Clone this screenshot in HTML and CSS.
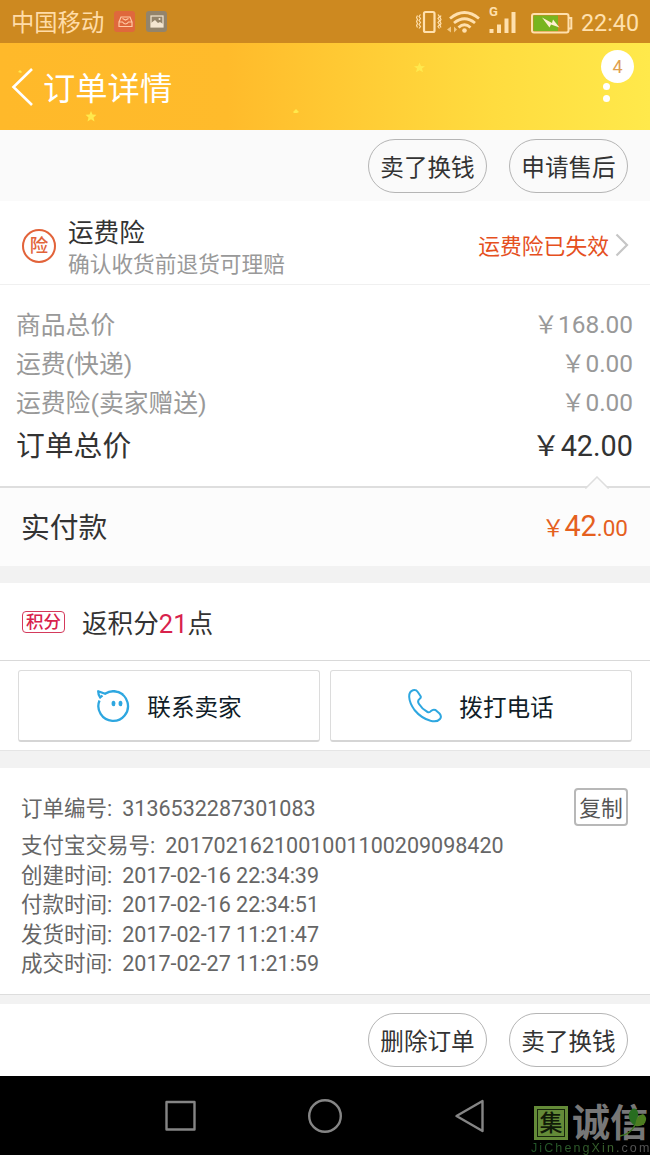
FILE: index.html
```html
<!DOCTYPE html>
<html lang="zh-CN">
<head>
<meta charset="utf-8">
<title>订单详情</title>
<link rel="stylesheet" href="styles.css">
</head>
<body>
<div class="screen">
  <div class="status">
    <span class="carrier">中国移动</span>
    <svg class="notifications" width="56" height="24" viewBox="0 0 56 24">
      <rect x="1" y="1" width="21" height="21" rx="3" fill="#df683c"/>
      <path d="M6 12L8 7H17L19 12V16.500H6V12H9.500Q12.500 16 15.500 12H19M9.500 8.500L12.500 10L15.500 8.500" fill="none" stroke="#ffc9a4" stroke-width="1.200"/>
      <rect x="33" y="1" width="21" height="21" rx="3" fill="#93846b"/>
      <rect x="38" y="6" width="12" height="11" fill="none" stroke="#f4e6d0" stroke-width="1.200"/>
      <path d="M38 13L42 10L45 13L47 12L50 14V17H38Z" fill="#f4e6d0"/><circle cx="46.500" cy="9" r="1" fill="#f4e6d0"/>
    </svg>
    <svg class="signals" width="158" height="36" viewBox="0 0 158 36" fill="none" stroke="#ffe0ad">
      <rect x="8" y="8" width="10.500" height="20" rx="1.500" stroke-width="2.200"/>
      <path d="M4.500 10.500l-1.500 2 1.500 2-1.500 2 1.500 2-1.500 2 1.500 2-1.500 2M1.500 11.500l-1 2 1 2-1 2 1 2-1 2 1 2M22 10.500l1.500 2-1.500 2 1.500 2-1.500 2 1.500 2-1.500 2 1.500 2M25 11.500l-1 2 1 2-1 2 1 2-1 2 1 2" stroke-width="1.200"/>
      <path d="M34 14.500Q48.500 2.500 63 14.500M38 19Q48.500 10.500 59 19M42.500 23.500Q48.500 18 54.500 23.500" stroke-width="2.800"/>
      <circle cx="48.500" cy="26.500" r="2.300" fill="#ffe0ad" stroke="none"/>
      <path d="M31 25.500l4-3v6zM41 25.500l-3-3v6z" fill="#f0c783" stroke="none"/>
      <path d="M73.500 25h4v4h-4zM81 20.500h4V29h-4zM88.500 14.500h4V29h-4zM95.500 8h4v21h-4z" fill="#ffe0ad" stroke="none"/>
      <rect x="116" y="10" width="36.500" height="18.500" rx="2" stroke-width="2"/>
      <path d="M117.500 11.500H142V27H117.500Z" fill="#78b51f" stroke="none"/>
      <path d="M153 14h2.300v10.500H153" stroke-width="2"/>
      <path d="M126 13.500L136 19L137 15.500L143.500 23.500L135 20.500L133.500 23.500Z" fill="#fff0d2" stroke="none"/>
    </svg>
    <span class="network">G</span>
    <span class="clock">22:40</span>
  </div>

  <div class="header">
    <svg class="stars" width="650" height="87" viewBox="0 0 650 87" fill="#ffe94d">
      <path d="M91 68l1.500 3.500 4 .3-3 2.600 1 4-3.500-2.200-3.500 2.200 1-4-3-2.600 4-.3z"/>
      <path d="M419.500 19.500l1.500 3.500 4 .3-3 2.300 1 3.600-3.500-2-3.500 2 1-3.600-3-2.300 4-.3z"/>
      <path d="M293 69l3-3 3 3-2 1h-3zM18 29l2-2 2 2-1 1z"/>
    </svg>
    <svg class="back" width="24" height="42" viewBox="0 0 24 42"><path d="M22 3L3.500 21L22 39" fill="none" stroke="#fff" stroke-width="2.600"/></svg>
    <h1 class="title">订单详情</h1>
    <div class="more"><span class="badge">4</span><i class="dot"></i><i class="dot"></i></div>
  </div>

  <div class="actions top-actions"><span class="pill">卖了换钱</span><span class="pill">申请售后</span></div>

  <div class="insurance">
    <span class="seal">险</span>
    <div class="insurance-text"><div class="insurance-name">运费险</div><div class="insurance-note">确认收货前退货可理赔</div></div>
    <span class="expired">运费险已失效</span>
    <svg class="chevron" width="14" height="26" viewBox="0 0 14 26"><path d="M1.500 2.500L12 13L1.500 23.500" fill="none" stroke="#c6c6c6" stroke-width="2.200"/></svg>
  </div>

  <div class="prices">
    <div class="price"><span class="label">商品总价</span><span>&#xFFE5;168.00</span></div>
    <div class="price"><span class="label">运费(快递)</span><span>&#xFFE5;0.00</span></div>
    <div class="price"><span class="label">运费险(卖家赠送)</span><span>&#xFFE5;0.00</span></div>
    <div class="price total"><span>订单总价</span><span>&#xFFE5;42.00</span></div>
  </div>

  <div class="paid">
    <svg class="notch" width="24" height="13" viewBox="0 0 24 13"><path d="M1 12L12 1L23 12V13H1Z" fill="#fcfcfc"/><path d="M0 12H1L12 1L23 12H24" fill="none" stroke="#dedede" stroke-width="1.500"/></svg>
    <span class="paid-label">实付款</span>
    <span class="paid-sum">&#xFFE5;<b>42</b>.00</span>
  </div>
  <div class="gap"></div>

  <div class="points"><span class="tag">积分</span><span class="points-text">返积分<em>21</em>点</span></div>

  <div class="contact">
    <div class="contact-button">
      <svg width="34" height="34" viewBox="0 0 34 34" fill="none" stroke="#2ea7e0" stroke-width="2.300" stroke-linejoin="round"><path d="M3.500 11.500A14.800 14.800 0 1 0 9 4.800L2.200 2.200Q2.200 6 4.200 8.500L6.500 6.500M9 4.800Q13 2.300 18 2.200Q23 2.500 27 5.500"/><ellipse cx="17.500" cy="14.500" rx="1.900" ry="2.800" fill="#2ea7e0" stroke="none"/><ellipse cx="24.500" cy="14.500" rx="1.900" ry="2.800" fill="#2ea7e0" stroke="none"/></svg>
      <span>联系卖家</span>
    </div>
    <div class="contact-button">
      <svg width="34" height="34" viewBox="0 0 34 34" fill="none" stroke="#2ea7e0" stroke-width="2" stroke-linejoin="round"><path d="M1.200 8Q1 2.500 5 1.300Q8 .5 9.800 3L12.500 7Q13.500 8.500 11.500 10Q9 12 11 15Q14 20 19.500 23Q21.500 24 23 22Q25 20 27.500 21L31.500 24.500Q34 27.500 32 30Q29 33.500 22.500 31.800Q13 29 6.500 21Q1.500 14 1.200 8Z"/></svg>
      <span>拨打电话</span>
    </div>
  </div>
  <div class="gap second-gap"></div>

  <div class="info">
    <div class="info-row number"><span><span class="key">订单编号:</span>3136532287301083</span><span class="copy">复制</span></div>
    <div class="info-row"><span class="key">支付宝交易号:</span>2017021621001001100209098420</div>
    <div class="info-row"><span class="key">创建时间:</span>2017-02-16 22:34:39</div>
    <div class="info-row"><span class="key">付款时间:</span>2017-02-16 22:34:51</div>
    <div class="info-row"><span class="key">发货时间:</span>2017-02-17 11:21:47</div>
    <div class="info-row"><span class="key">成交时间:</span>2017-02-27 11:21:59</div>
  </div>
  <div class="gap small-gap"></div>

  <div class="actions bottom-actions"><span class="pill">删除订单</span><span class="pill">卖了换钱</span></div>

  <div class="navbar">
    <svg class="keys" width="322" height="36" viewBox="0 0 322 36" fill="none" stroke="#858585" stroke-width="2.400" stroke-linejoin="round"><rect x="2.500" y="4" width="28" height="27.500"/><circle cx="161" cy="18" r="15.800"/><path d="M318.500 3V33L292.500 18Z"/></svg>
    <div class="watermark">
      <div class="brand"><span class="brand-mark">集</span><span class="brand-name">诚信</span></div>
      <div class="brand-url">JiChengXin.com</div>
      <svg class="leaf" width="30" height="34" viewBox="0 0 30 34"><path d="M16 21Q8 15 10 8Q14 1 18 5Q21 9 16 21Z" fill="#286d20"/><path d="M16 21Q17 10 24 9Q29 12 26 18Q22 22 16 21Z" fill="#4d7d20"/><path d="M16 20Q12 29 1 31" fill="none" stroke="#3f7422" stroke-width="1.500"/></svg>
    </div>
  </div>
</div>
</body>
</html>
```
FILE: styles.css
```css
* { box-sizing: border-box; }
body { margin: 0; }
.screen {
  width: 650px; height: 1155px; overflow: hidden;
  display: flex; flex-direction: column;
  background: #fff; color: #333;
  font-family: Roboto, "Noto Sans CJK SC", sans-serif;
  font-weight: 400; white-space: nowrap;
}
.screen > div { flex: none; }
.status {
  position: relative; height: 43px; padding: 0 11px;
  display: flex; align-items: center;
  background: #cd8920; color: #ffe0ad;
}
.carrier { padding-top: 2px; font-size: 23.3px; line-height: 42px; color: #ffdca8; }
.notifications { margin-left: 9px; }
.signals { margin-left: auto; }
.network { position: absolute; left: 489px; top: 4px; font: 700 13px/16px Roboto, sans-serif; }
.clock { margin-left: 7px; font-size: 23.3px; padding-top: 3px; }
.header {
  position: relative; height: 87px; padding-left: 10px;
  display: flex; align-items: center;
  background: linear-gradient(90deg, #ffb92a 0%, #ffbb2b 35%, #ffc933 52%, #ffdc3f 76%, #ffe94b 100%);
  color: #fff;
}
.stars { position: absolute; left: 0; top: 0; }
.back { position: relative; }
.title { position: relative; margin: 5px 0 0 9px; font-size: 32.3px; font-weight: 400; line-height: 44px; }
.more { margin-left: auto; align-self: flex-start; width: 51px; padding-top: 7px; display: flex; flex-direction: column; }
.badge { width: 33px; height: 33px; margin-left: 2px; border-radius: 50%; background: #fff; color: #dfa04f; font-size: 18px; line-height: 34px; text-align: center; }
.dot { width: 7px; height: 7px; margin: 0 0 5px 4px; border-radius: 50%; background: #fff; }
.actions { display: flex; justify-content: flex-end; align-items: center; gap: 22px; padding-right: 22px; }
.top-actions { height: 71px; background: #fafafa; }
.bottom-actions { height: 72px; }
.pill { width: 119px; height: 54px; padding-top: 1px; border: 1px solid #b5b5b5; border-radius: 27px; font-size: 23.6px; line-height: 54px; text-align: center; background: #fff; }
.top-actions .pill { background: transparent; }
.insurance { height: 84px; padding: 0 21px 0 22px; display: flex; align-items: center; border-bottom: 1px solid #f0f0f0; }
.seal { width: 34px; height: 34px; margin-top: 6px; border: 2px solid #e2633a; border-radius: 50%; color: #e2633a; font-size: 18.5px; font-weight: 500; line-height: 31px; text-align: center; }
.insurance-text { margin: 13px 0 0 12px; }
.insurance-name { font-size: 25.6px; line-height: 32px; }
.insurance-note { font-size: 21.7px; line-height: 32px; color: #999; }
.expired { margin: 9px 6px 0 auto; color: #e5501e; font-size: 21.8px; line-height: 32px; }
.chevron { margin-top: 5px; }
.prices { height: 201px; padding: 20px 17px 0 16px; }
.price { display: flex; justify-content: space-between; height: 39px; color: #999; font-size: 24.4px; line-height: 39px; }
.label { padding-top: 1px; font-size: 24.8px; }
.price.total { height: 47px; padding-top: 1px; color: #333; font-size: 28.8px; line-height: 46px; }
.paid { position: relative; height: 80px; padding: 0 22px; display: flex; align-items: center; justify-content: space-between; border-top: 2px solid #dedede; background: #fcfcfc; }
.notch { position: absolute; left: 585px; top: -12px; }
.paid-label { margin: 2px 0 0 -1px; font-size: 28.8px; line-height: 76px; }
.paid-sum { color: #e5601e; font-size: 22.5px; line-height: 78px; }
.paid-sum b { font-size: 28.8px; font-weight: 400; }
.gap { height: 17px; background: #f2f2f2; }
.points { height: 78px; padding: 0 22px; display: flex; align-items: center; border-bottom: 1px solid #d9d9d9; }
.tag { width: 43px; height: 22px; border: 1px solid #d43a5c; border-radius: 4px; color: #d8224c; font-size: 17.5px; font-weight: 500; line-height: 21px; text-align: center; }
.points-text { margin: 4px 0 0 17px; font-size: 25.6px; line-height: 40px; }
.points-text em { color: #d8224c; font-style: normal; }
.contact { height: 89px; padding: 9px 18px 8px; display: flex; gap: 10px; }
.contact-button { flex: 1; padding-top: 1px; display: flex; align-items: center; justify-content: center; gap: 17px; border: 1px solid #dcdcdc; border-bottom: 2px solid #d5d5d5; border-radius: 3px; color: #111d28; font-size: 23.6px; line-height: 36px; }
.contact-button span { padding-top: 4px; }
.second-gap { height: 18px; border-top: 1px solid #e5e5e5; }
.info { height: 227px; padding: 19px 22px 0 21px; border-bottom: 1px solid #ddd; color: #666; font-size: 21.5px; }
.info-row { line-height: 29.5px; }
.key { margin-right: 10px; }
.info-row.number { height: 44px; display: flex; align-items: flex-start; justify-content: space-between; line-height: 44px; }
.copy { width: 54px; height: 38px; margin-top: 1px; border: 2px solid #b8b8b8; border-radius: 4px; font-size: 21.8px; line-height: 37px; text-align: center; color: #555; }
.small-gap { height: 9px; }
.navbar { position: relative; height: 79px; padding: 22px 0 0 164px; background: #000; }
.keys { display: block; }
.watermark { position: absolute; left: 531px; top: 28px; width: 119px; height: 51px; }
.brand { display: flex; align-items: center; height: 38px; padding-left: 3px; }
.brand-mark { width: 34px; height: 34px; flex: none; border: 2px solid #648b38; outline: 1px solid #16240c; outline-offset: -4px; background: #648b38; color: #101b08; font-size: 23px; font-weight: 500; line-height: 31px; text-align: center; }
.brand-name { margin-left: 4px; color: #777; font-size: 38px; font-weight: 700; line-height: 36px; }
.brand-url { font: 12.5px/13px "Liberation Sans", sans-serif; letter-spacing: 2.1px; color: transparent; background: linear-gradient(90deg, #205428 0%, #3c632d 70%, #555 76%); background-clip: text; }
.leaf { position: absolute; right: 1px; top: 1px; }
```
